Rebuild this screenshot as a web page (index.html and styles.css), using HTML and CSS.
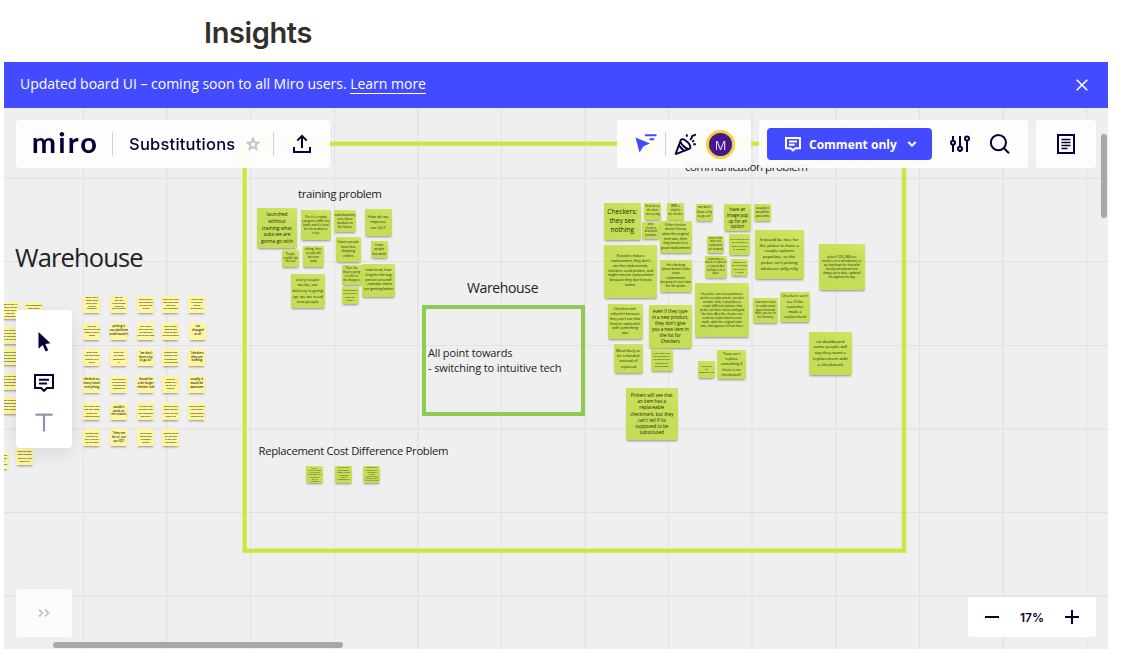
FILE: index.html
```html
<!DOCTYPE html>
<html lang="en">
<head>
<meta charset="utf-8">
<title>Insights</title>
<link rel="stylesheet" href="styles.css">
</head>
<body>
<h1 class="page-title">Insights</h1>
<main class="embed">
  <div class="banner">
    <p class="banner-text">Updated board UI – coming soon to all Miro users. <a class="banner-link">Learn more</a></p>
    <svg class="close" width="12" height="12" viewBox="0 0 12 12"><path d="M.7.7l10.6 10.6M11.3.7L.7 11.3"/></svg>
  </div>
  <section class="board">
    <div class="world" id="world">
      <svg class="shapes" width="1131" height="668" viewBox="0 0 1131 668">
        <path class="grid-line" d="M83.5 100V660M250.5 100V660M334.500 100V660M501.500 100V660M668.500 100V660M752 100V660M919.500 100V660M1086.500 100V660M0 261.500H1110M0 345.500H1110M0 512.500H1110"/>
        <path class="grid-line wide" d="M167 100V660M418 100V660M585 100V660M836 100V660M1003 100V660M0 178.300H1110M0 429H1110M0 596H1110"/>
        <rect class="frame-halo" x="244.600" y="143.700" width="659.400" height="407"/>
        <rect class="frame" x="244.600" y="143.700" width="659.400" height="407"/>
        <rect class="box" x="424" y="307" width="159" height="107"/>
        <text x="15" y="266.500" font-size="25.500" textLength="128.500">Warehouse</text>
        <text x="298" y="198.300" font-size="11.500" textLength="84">training problem</text>
        <text x="685" y="170.500" font-size="11.500" textLength="123">communication problem</text>
        <text x="467" y="293.300" font-size="14" textLength="71.500">Warehouse</text>
        <text x="428" y="357.300" font-size="11" textLength="84.500">All point towards</text>
        <text x="428" y="372.300" font-size="11" textLength="133.500">- switching to intuitive tech</text>
        <text x="258.500" y="455.300" font-size="11.300" textLength="190">Replacement Cost Difference Problem</text>
      </svg>
    </div>

    <div class="topbar">
      <div class="panel title-panel">
        <svg class="logo" width="64" height="26" viewBox="0 0 64 26"><text x="-1.200" y="22.300" textLength="65" lengthAdjust="spacing">miro</text></svg>
        <i class="rule"></i>
        <span class="board-name">Substitutions</span>
        <svg class="star" width="14" height="14" viewBox="0 0 14 14"><path d="M7 1.600l1.500 3.700 4 .3-3 2.600.9 3.900L7 10l-3.400 2.100.9-3.900-3-2.600 4-.3z"/></svg>
        <i class="rule rule-b"></i>
        <svg class="ink" width="20" height="20" viewBox="0 0 20 20"><path d="M2 13v5h16v-5M10 14V2M5.300 6.600L10 1.900l4.700 4.700"/></svg>
      </div>
      <div class="panel collab">
        <svg class="pointer" width="24" height="24" viewBox="0 0 24 24"><path fill="#424bff" d="M1.500 6.500l14.500 6-6.500 2.800-4 6.200z"/><path stroke="#424bff" stroke-width="2" d="M11 4.300h11.500M15.500 8.300h4.700"/></svg>
        <i class="rule"></i>
        <svg class="ink party" width="24" height="24" viewBox="0 0 24 24"><path d="M7 7.700L1.800 21.400c-.2.500.1.700.6.500L15.800 16.600M7 7.700c-1 1.200 0 4 2.400 6.300s5.200 3.500 6.400 2.600c1.300-1.100.3-4-2.100-6.300S8.200 6.500 7 7.700zM5 13.500l4.500 5"/><path d="M12.800 2.300v2.400M21.800 12.300h-2.500M16 7.800l1.300-1.300c.9-.9.2-1.800 1-2.600s1.700 0 2.600-.9l.8-.8M18.200 9.600l2-.9"/></svg>
        <span class="avatar">M</span>
      </div>
      <div class="panel actions">
        <div class="mode">
          <svg width="18" height="18" viewBox="0 0 18 18"><path d="M2 3h14v10.200h-4.600L9 15.300l-2.400-2.100H2zM5 6.500h8M5 9.800h5.500"/></svg>
          <span>Comment only</span>
          <svg class="chev" width="10" height="8" viewBox="0 0 10 8"><path d="M1.300 2L5 5.700 8.700 2"/></svg>
        </div>
        <svg class="ink sliders" width="22" height="22" viewBox="0 0 22 22"><path d="M4 3v4.500M4 12v7M11 3v10M11 18v1M18 8v11"/><circle cx="4" cy="9.800" r="2"/><circle cx="11" cy="15.800" r="2"/><circle cx="18" cy="5.500" r="2"/></svg>
        <svg class="ink search" width="22" height="22" viewBox="0 0 22 22"><circle cx="9.400" cy="9.600" r="7.600"/><path d="M15 15.200l5 5"/></svg>
      </div>
      <div class="panel notes-panel">
        <svg class="ink" width="20" height="22" viewBox="0 0 20 22"><path d="M2 2h16v18H2z"/><path class="thin" d="M5.500 6.500h9M5.500 9.500h9M5.500 12.500h9M5.500 15.500h6"/></svg>
      </div>
    </div>

    <div class="tools">
      <svg width="22" height="24" viewBox="0 0 22 24"><path fill="#050038" d="M5.500 2l12 11.300-5.200.6 3 6.300-2.700 1.300-3-6.400-4.100 3.700z"/></svg>
      <svg class="ink" width="22" height="22" viewBox="0 0 22 22"><path d="M2 3h18v13h-6l-3 2.800L8 16H2zM6 7.700h10M6 11.500h8"/></svg>
      <svg width="22" height="22" viewBox="0 0 22 22"><path fill="none" stroke="#9590ad" stroke-width="2.200" d="M2.500 3.600h17M11 3.600v16.900"/></svg>
    </div>
    <div class="expand"><svg width="14" height="10" viewBox="0 0 14 10"><path d="M2 1.500L5.500 5 2 8.500M8 1.500L11.500 5 8 8.500"/></svg></div>
    <div class="zoom-panel">
      <svg class="ink" width="16" height="16" viewBox="0 0 16 16"><path d="M1 8h14"/></svg>
      <span>17%</span>
      <svg class="ink" width="16" height="16" viewBox="0 0 16 16"><path d="M1 8h14M8 1v14"/></svg>
    </div>
    <div class="scroll-x"></div>
    <div class="scroll-y"></div>
  </section>
</main>
<script src="notes.js"></script>
</body>
</html>
```
FILE: styles.css
```css
body { margin: 0; background: #fff; width: 1131px; height: 668px; overflow: hidden; font-family: "Open Sans", "Noto Sans", sans-serif; }
.page-title { margin: 0; height: 62px; padding: 14px 0 0 204px; box-sizing: border-box; font: 600 29px/37px Inter, sans-serif; letter-spacing: -.4px; color: #32302c; }
.embed { margin-left: 4px; width: 1104px; }
.banner { height: 46px; box-sizing: border-box; padding: 0 20px 0 16px; display: flex; align-items: center; justify-content: space-between; background: #424bff; color: #fff; }
.banner-text { margin: 0 0 3px; font-size: 14px; line-height: 19px; letter-spacing: -.01px; white-space: nowrap; }
.banner-link { border-bottom: 1px solid #fff; }
.close { fill: none; stroke: #fff; stroke-width: 1.6; }
.board { position: relative; height: 541px; overflow: hidden; background: #efefef; }
.world { position: absolute; left: -4px; top: -108px; width: 1131px; height: 668px; }
.shapes { display: block; fill: #222; }
.grid-line { fill: none; stroke: #e1e1e1; stroke-width: 1; }
.grid-line.wide { stroke: #e6e6e6; stroke-width: 2; }
.frame-halo { fill: none; stroke: #d8eb7b; stroke-width: 4.800; }
.frame { fill: none; stroke: #cbe644; stroke-width: 3.400; }
.box { fill: none; stroke: #8fcb50; stroke-width: 4; }

.note { position: absolute; display: flex; align-items: center; justify-content: center; text-align: center; white-space: pre; line-height: 1.36; font-weight: 500; color: #1c2208; background: linear-gradient(20deg, #c4dd58, #c6df58 70%, #d0e667); box-shadow: 0 2px 2px -1px rgba(50, 50, 50, .5); }
.note.yellow { font-weight: 600; color: #222008; background: #fdf69f; }

.topbar { position: absolute; left: 12px; right: 12px; top: 12px; height: 48px; display: flex; }
.panel { box-sizing: border-box; height: 48px; display: flex; align-items: center; background: rgba(255, 255, 255, .86); backdrop-filter: blur(5px); border-radius: 4px; }
.ink { fill: none; stroke: #050038; stroke-width: 2; }
.thin { stroke-width: 1.600; }
.rule { width: 1px; height: 24px; background: #d4d3df; }
.title-panel { width: 314px; padding-left: 17px; margin-right: 287px; }
.logo { fill: #050038; font: 700 29px Lato, sans-serif; margin-right: 15px; }
.board-name { font: 500 16.500px/24px Inter, sans-serif; letter-spacing: .22px; color: #050038; width: 106px; margin: 0 11px 0 16px; white-space: nowrap; }
.star { fill: none; stroke: #c3c2cf; stroke-width: 1.800; }
.rule-b { margin: 0 18px 0 13px; }
.collab { width: 134px; padding-left: 17px; margin-right: 8px; }
.pointer { margin-top: -2px; }
.collab .rule { margin: 0 8px 0 7px; }
.party { stroke-width: 1.900; margin-right: 8px; }
.avatar { width: 29px; height: 29px; box-sizing: border-box; border: 3px solid #f8cf3b; border-radius: 50%; background: #43198f; color: #e5dcf2; font: 500 13px/24px "Open Sans", sans-serif; text-align: center; }
.actions { width: 269px; padding-left: 8px; margin-right: 8px; }
.mode { width: 165px; height: 32px; box-sizing: border-box; padding: 0 15px 0 17px; display: flex; align-items: center; background: #424bff; border-radius: 4px; color: #fff; font-size: 12px; font-weight: 700; white-space: nowrap; }
.mode svg { fill: none; stroke: #fff; stroke-width: 2; margin-right: 7px; }
.mode .chev { margin: 0 0 0 auto; }
.sliders { margin: 0 18px 0 17px; }
.notes-panel { width: 60px; justify-content: center; }

.tools { position: absolute; left: 12px; top: 202px; width: 56px; height: 138px; box-sizing: border-box; padding: 20px 0 15px; display: flex; flex-direction: column; align-items: center; justify-content: space-between; background: #fff; border-radius: 4px; box-shadow: 0 6px 18px rgba(5, 0, 56, .09); }
.expand { position: absolute; left: 12px; top: 481px; width: 56px; height: 48px; display: flex; align-items: center; justify-content: center; background: #fcfcfc; border-radius: 4px; }
.expand svg { fill: none; stroke: #c6c4d4; stroke-width: 1.800; }
.zoom-panel { position: absolute; right: 12px; top: 489px; width: 128px; height: 40px; box-sizing: border-box; padding: 0 16px; display: flex; align-items: center; justify-content: space-between; background: #fff; border-radius: 4px; font: 600 12px Inter, sans-serif; color: #050038; }
.scroll-x { position: absolute; left: 49px; top: 534px; width: 290px; height: 6px; border-radius: 3px; background: #a8a8a8; }
.scroll-y { position: absolute; left: 1097px; top: 26px; width: 6px; height: 84px; border-radius: 3px; background: #a8a8a8; }
```
FILE: notes.js
```js
// Each note: x, y, size, font size, text lines separated by "|".
const green = [
  [257, 208, 40, 4.9, "launched|without|training what|subs we are|gonna go with"],
  [300.5, 209.5, 30.5, 3, "The it's a rowdy|categories different|kinds and it's hard|for them what to|relay"],
  [334, 210, 22, 3.1, "substitutability|over those|modules in|the future"],
  [364.5, 208.5, 27, 4.1, "How do we|improve|our QC?"],
  [282, 250, 17, 2.8, "People|couldn't do|the tool"],
  [303, 245.5, 21, 2.9, "calling, there|people will|decision|tasks"],
  [335.5, 236.5, 25.5, 3.4, "future people|have less|shipping|orders"],
  [370.5, 241, 17, 3.2, "I train|people|last week"],
  [290.5, 273.5, 34.5, 4.1, "every couple|weeks, our|delivery is going|up- we we need|new people"],
  [341.5, 265, 20, 2.8, "There like|they're going|or refer to|the shoppers"],
  [341.5, 287, 17, 2.4, "I know people|to be careful|what are|good?"],
  [362, 263.5, 33, 3.6, "new hired, how|long for the avg|person around?|- calendar times|are getting better"],
  [604, 203, 36.5, 6.6, "Checkers:|they see|nothing"],
  [644, 202.5, 17, 2.8, "Ex-delivery|the most|overseeing"],
  [667, 202.5, 17, 2.7, "WMS is|slow for|the checker"],
  [696, 203.5, 17, 3.3, "we don't|have a lot|to go on\""],
  [724, 204, 27, 4.4, "have an|image pop|up for an|option"],
  [754, 203.5, 17, 3.1, "usually it|would be|awesome"],
  [642, 221.5, 17.5, 2.6, "write|checkers|show both|products"],
  [659.5, 220.5, 32, 3.4, "if the checker|doesn't know|what the original|item was, then|they know it's a|good replacement"],
  [604, 244.5, 53, 3.6, "If pickers make a|replacement, they don't|see the replacement,|checkers scold pickers, and|might remove replacement|because they don't know|better"],
  [659.5, 259.5, 32.5, 3.2, "the checking|phase doesn't take|issue|replacement|because it's not clear|for the picker"],
  [707, 235.5, 17, 2.6, "prices that|were not|replaced in|our network"],
  [729, 234, 21, 2.4, "the picker can be|set to require|many different|or the same"],
  [704.5, 255.5, 22.5, 2.7, "sometimes a|week it replaced|a request but|half were on a|place"],
  [731, 259, 17, 2.5, "wording of|my customer|will be not|it there"],
  [755, 230, 48.5, 4.3, "It would be nice for|the picker to have a|couple options|populate, so the|picker isn't picking|whatever willy nilly"],
  [819, 244, 45.5, 2.95, "picker/ COO, SMS are|workers on a whiteboard, so|we had down for that with|literally whiteboard not|always up to date- updated|throughout the day"],
  [695, 283, 54, 2.95, "the picker can set a parameter|prefers a replacement, can allot|another item, it populates a|couple different options, that|picker can then choose and grab|the item. Also the checker can|send out replacements some|made, what the original order|was, and approve it from there"],
  [753, 298, 25, 2.9, "customers have|to understand|general words|with, you are in|for memory"],
  [780, 291.5, 30, 3.9, "Checkers can't|see if the|customer|made a|replacement"],
  [809, 332, 42.5, 4.3, "on dashboard|some people will|say they want a|replacement with|a checkmark"],
  [607.5, 304, 35, 3.6, "Checkers will|refund it because|they can't see that|they've replaced it|with something|else"],
  [648.5, 304.5, 43.5, 4.5, "even if they type|in a new product,|they don't give|you a new item in|the list for|Checkers"],
  [614, 344, 28.5, 3.9, "Most likely to|be refunded|instead of|replaced"],
  [650.5, 349, 22, 2.4, "If the item is not|you are small in|the screen with|shipping for|the customer"],
  [698, 361, 17, 2.4, "There are|no|opportunities"],
  [717, 349.5, 29, 3.7, "\"how can I|replace|something if|there is no|checkmark\""],
  [625.5, 387.5, 52.5, 4.6, "Pickers will see that|an item has a|replaceable|checkmark, but they|can't tell if its|supposed to be|substituted"],
  [306, 466, 17, 1.6, "They still|have to pay more|than the price|replacement item|at the register|for it in|a customer"],
  [335, 466, 17, 1.8, "if things have|the customer|doesn't replace|it can't cost|a lot of|increased high"],
  [363.3, 465.5, 17, 1.6, "customer order|prices than they|had planned|for item|substitution and|we cannot return|for free, for them"],
];

const phrases = [
  "would love it|easier to get|to the daily|and we|questions", "they do|not have|a new system|to set up|new products", "some one is|replacement|we get from|it than", "when we have|work stations|and pick|the customer", "I love to see|to replace|safety|selection it",
  "they set|working on the|same kind of|tasks", "picking it|our platform|understand it", "the picker|can then add|all checkers|are at the time", "the checker|sometimes|have to look|at the product", "not|changed|at all",
  "what kind|like this that?|checker it is|seen?", "there will|tell them|somewhat|it", "\"we don't|have a lot|to go on\"", "system that|allow to the|changes on|replacement", "\"checkers|they are|nothing",
  "checked on,|many times|everything", "the product|in stock that|recommend|something", "should be|a bit longer|checker role", "without|image able|up for an|option", "usually it|would be|awesome",
  "the picker can|see the items|about the|replacements", "couldn't|work on|the station", "it is the best|to know how|the customer|sees their", "should allow|many orders|a way to find|what it is", "the substitute|can be set|complicated|items to do",
  "a substitute|allowed to|be in a place|for the item", "\"they see|for or, our|our QC?", "the screen|conditions|shipping|orders", "when picking|we can see|in the cart|the report"
];
const yellow = [];
const cols = [83.3, 110.3, 137.3, 162.2, 188.3];
const rows = [295.6, 322.6, 349, 375.7, 403, 429.3];
phrases.forEach((text, i) => {
  const lines = text.split("|").length;
  yellow.push([cols[i % 5] + (i === 9 ? 1 : 0), rows[Math.floor(i / 5)], 17, lines > 4 ? 2.1 : lines > 3 ? 2.3 : 2.9, text]);
});
[[1.5, 302], [25.3, 301.7], [1.5, 326.5], [1.5, 348.3], [1.5, 372.6], [1.5, 396.7], [-9, 451.5], [16, 448]].forEach(([x, y], i) => {
  yellow.push([x, y, 17, 2.3, phrases[[0, 24, 7, 13, 22, 8, 20, 23][i]]]);
});

const world = document.getElementById("world");
function draw(list, kind) {
  list.forEach(([x, y, size, font, text]) => {
    const el = document.createElement("div");
    el.className = "note " + kind;
    el.style.cssText = `left:${x}px;top:${y}px;width:${size}px;height:${size}px;font-size:${font}px`;
    el.textContent = text.split("|").join("\n");
    world.append(el);
  });
}
draw(green, "green");
draw(yellow, "yellow");
```
